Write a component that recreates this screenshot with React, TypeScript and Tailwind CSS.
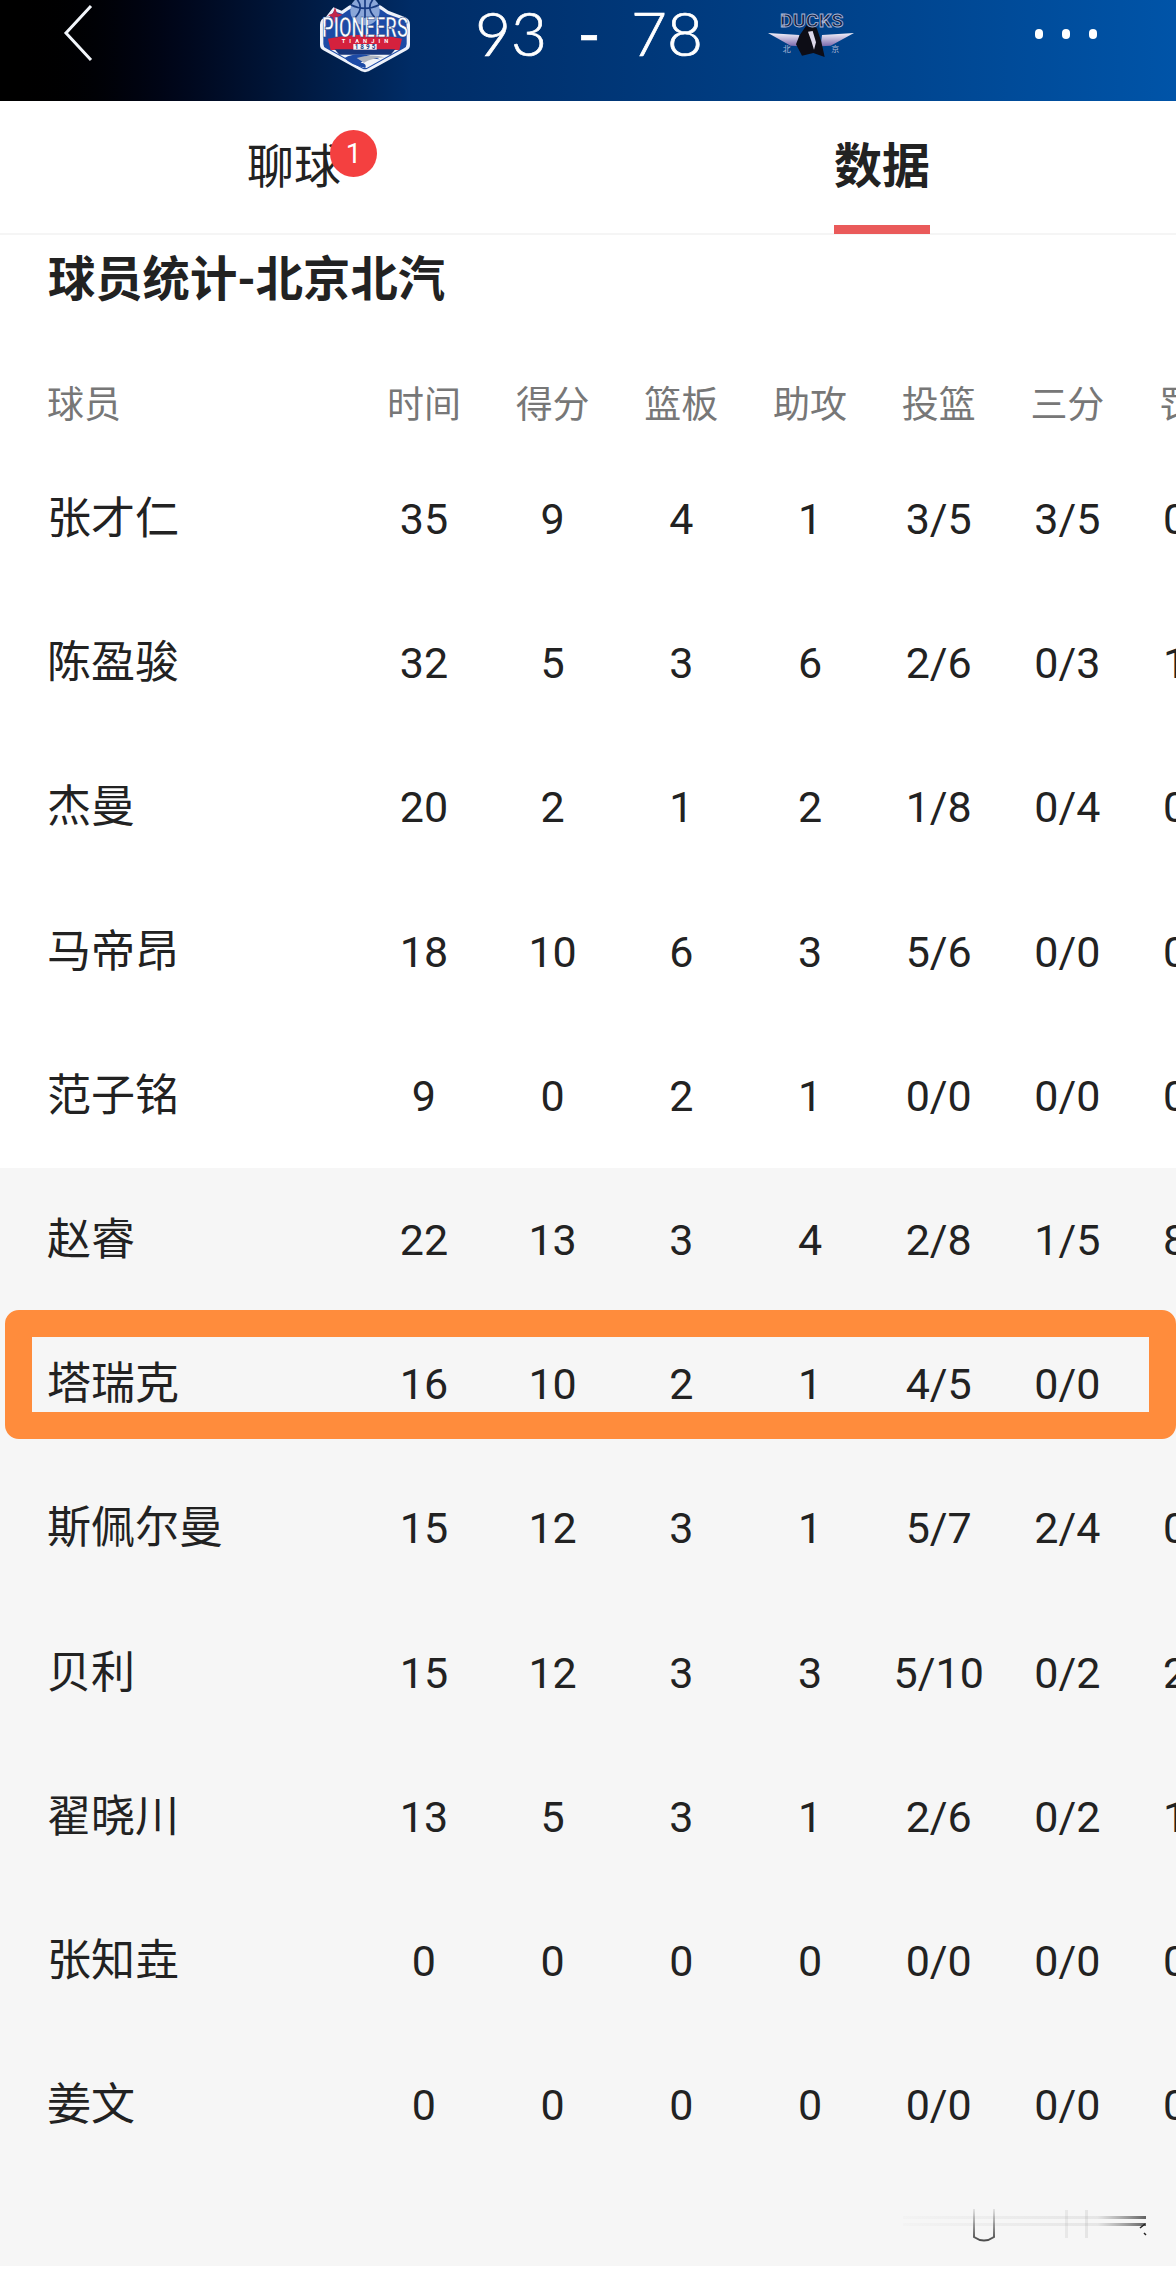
import React from 'react';

const CJK = "font-['Roboto','Noto_Sans_CJK_SC',sans-serif]";

const columns = ['时间', '得分', '篮板', '助攻', '投篮', '三分', '罚球'];

// the last column runs off the right edge of the screen, as in the app
const starters = [
  ['张才仁', '35', '9', '4', '1', '3/5', '3/5', '0/0'],
  ['陈盈骏', '32', '5', '3', '6', '2/6', '0/3', '1/2'],
  ['杰曼', '20', '2', '1', '2', '1/8', '0/4', '0/0'],
  ['马帝昂', '18', '10', '6', '3', '5/6', '0/0', '0/0'],
  ['范子铭', '9', '0', '2', '1', '0/0', '0/0', '0/0'],
];

const bench = [
  ['赵睿', '22', '13', '3', '4', '2/8', '1/5', '8/8'],
  ['塔瑞克', '16', '10', '2', '1', '4/5', '0/0', '2/2'],
  ['斯佩尔曼', '15', '12', '3', '1', '5/7', '2/4', '0/0'],
  ['贝利', '15', '12', '3', '3', '5/10', '0/2', '2/2'],
  ['翟晓川', '13', '5', '3', '1', '2/6', '0/2', '1/2'],
  ['张知垚', '0', '0', '0', '0', '0/0', '0/0', '0/0'],
  ['姜文', '0', '0', '0', '0', '0/0', '0/0', '0/0'],
];

const PioneersLogo = () => (
  <svg viewBox="0 0 360 240" className="h-[80px] w-[120px] shrink-0">
    <path d="M60 74 Q60 56 78 50 L100 22 L125 32 Q195 -24 265 32 L312 50 Q330 56 330 74 L330 135 Q330 146 320 151 L206 214 Q195 219 184 214 L70 151 Q60 146 60 135 Z" fill="#eef2fa" />
    <path d="M70 78 Q70 62 84 58 L102 34 L128 42 Q195 -12 262 42 L306 58 Q320 62 320 78 L320 132 Q320 141 312 145 L202 206 Q195 210 188 206 L78 145 Q70 141 70 132 Z" fill="#1c4aa6" />
    <circle cx="195" cy="32" r="44" fill="#8aa6d8" />
    <path d="M152 14 Q195 36 238 14 M195 -12 L195 54 M166 52 Q195 22 166 -8 M224 52 Q195 22 224 -8" stroke="#173a80" strokeWidth="5" fill="none" />
    <path d="M84 116 Q195 92 306 116 L298 150 L92 150 Z" fill="#d4213d" />
    <path d="M94 150 L296 150 L200 204 L190 204 Z" fill="#f2f4f8" />
    <path d="M104 148 L286 148 L272 164 L118 164 Z" fill="#16357a" />
    <path d="M134 174 Q176 150 240 178 Q200 172 182 188 Q202 190 196 204 Q150 194 134 174 Z" fill="#1c4aa6" />
    <path d="M170 174 Q212 160 254 172 Q216 174 192 188 Z" fill="#aeb3bf" />
    <polygon points="105,22 111,40 128,44 112,52 105,72 98,52 84,46 99,40" fill="#c2264a" />
    <text x="66" y="112" textLength="258" lengthAdjust="spacingAndGlyphs" fontFamily="Roboto, sans-serif" fontWeight="500" fontSize="84" fill="#ffffff" stroke="#173a80" strokeWidth="1.5">PIONEERS</text>
    <text x="125" y="130" textLength="140" fontFamily="Roboto, sans-serif" fontWeight="700" fontSize="17" fill="#ffffff">TIANJIN</text>
    <rect x="160" y="132" width="70" height="17" fill="#f2f4f8" />
    <text x="164" y="148" textLength="62" fontFamily="Roboto, sans-serif" fontWeight="700" fontSize="19" fill="#173a80">1895</text>
  </svg>
);

const DucksLogo = () => (
  <svg viewBox="0 0 300 180" className="h-[60px] w-[100px] shrink-0">
    <defs>
      <linearGradient id="wing" x1="0" y1="0" x2="0" y2="1">
        <stop offset="0" stopColor="#f4f2fa" />
        <stop offset="1" stopColor="#7a68ac" />
      </linearGradient>
    </defs>
    <path d="M24 84 L118 90 L122 124 L92 122 Z" fill="url(#wing)" />
    <path d="M282 84 L186 90 L182 124 L212 122 Z" fill="url(#wing)" />
    <path d="M118 92 L140 60 L170 68 L184 110 L194 156 L160 144 L126 152 L108 118 Z" fill="#0d0d16" />
    <path d="M144 80 L158 78 L168 112 L162 134 L154 108 Z" fill="#dcd8ea" />
    <text x="60" y="65" textLength="190" lengthAdjust="spacingAndGlyphs" fontFamily="Roboto, sans-serif" fontWeight="700" fontSize="56" fill="#172242" stroke="#aab6d6" strokeWidth="2.5">DUCKS</text>
    <text x="68" y="140" fontFamily="'Noto Sans CJK SC', sans-serif" fontSize="24" fill="#aeb8d6">北</text>
    <text x="214" y="140" fontFamily="'Noto Sans CJK SC', sans-serif" fontSize="24" fill="#aeb8d6">京</text>
  </svg>
);

const StatRow = ({ cells }: { cells: string[] }) => (
  <div className="grid h-[144.2px] grid-cols-[359.6px_repeat(7,128.7px)] items-center text-[43px] leading-[50px] text-[#222222]">
    {cells.map((cell, i) => (
      <div key={i} className={i === 0 ? 'pl-[47px] whitespace-nowrap text-[44px]' : 'text-center whitespace-nowrap'}>
        {cell}
      </div>
    ))}
  </div>
);

export default function App() {
  return (
    <div className={`relative h-[2270px] w-[1176px] overflow-hidden bg-white ${CJK}`}>
      {/* top bar */}
      <div className="flex h-[101px] items-start bg-gradient-to-r from-black via-[#002c66] via-35% to-[#0054a8]">
        <svg viewBox="0 0 30 58" className="ml-[63px] mt-[4px] h-[58px] w-[30px] shrink-0">
          <path d="M28 2 L3 29 L28 56" fill="none" stroke="#f2f6fb" strokeWidth="3" />
        </svg>
        <div className="ml-[207px]">
          <PioneersLogo />
        </div>
        <div className="ml-[55px] mt-[-2px] flex w-[228px] justify-between font-['Lato',sans-serif] text-[62px] font-light leading-[68px] text-white [-webkit-text-stroke:0.7px_white]">
          <span>93</span>
          <span className="font-normal">-</span>
          <span>78</span>
        </div>
        <div className="ml-[57px] mt-[5px]">
          <DucksLogo />
        </div>
        <div className="ml-[175px] mt-[29px] flex gap-[19px]">
          <span className="h-[10px] w-[8px] rounded-full bg-white" />
          <span className="h-[10px] w-[8px] rounded-full bg-white" />
          <span className="h-[10px] w-[8px] rounded-full bg-white" />
        </div>
      </div>

      {/* tabs */}
      <div className="grid h-[134px] grid-cols-2 border-b-2 border-[#f5f5f5] text-[47px] leading-[48px] text-[#222222]">
        <div className="flex justify-center pt-[42px]">
          <div className="relative">
            聊球
            <span className="absolute left-[83px] top-[-13px] flex h-[47px] w-[47px] items-center justify-center rounded-full bg-[#f44040] text-[28px] leading-none text-white">
              1
            </span>
          </div>
        </div>
        <div className="flex flex-col items-center pt-[42px]">
          <span className="text-[48px] font-bold">数据</span>
          <span className="mt-[34px] h-[9px] w-[96px] bg-[#ea5a5a]" />
        </div>
      </div>

      {/* section title */}
      <div className="h-[130px] pl-[48px] pt-[21px] text-[47.3px] font-bold leading-[48px] text-[#222222]">
        球员统计-北京北汽
      </div>

      {/* table head */}
      <div className="grid h-[82px] grid-cols-[359.6px_repeat(7,128.7px)] items-center text-[37px] leading-[44px] text-[#777777]">
        <div className="pl-[47px]">球员</div>
        {columns.map((name) => (
          <div key={name} className="whitespace-nowrap text-center">
            {name}
          </div>
        ))}
      </div>

      {starters.map((cells) => (
        <StatRow key={cells[0]} cells={cells} />
      ))}

      {/* bench block */}
      <div className="relative mt-px h-[1098px] bg-[#f6f6f6]">
        <div className="-mt-px">
          {bench.map((cells) => (
            <StatRow key={cells[0]} cells={cells} />
          ))}
        </div>
        <svg viewBox="0 0 260 40" className="absolute left-[900px] top-[1039px] h-[40px] w-[260px]">
          <defs>
            <linearGradient id="smudge" x1="0" y1="0" x2="1" y2="0">
              <stop offset="0" stopColor="#555555" stopOpacity="0.02" />
              <stop offset="0.8" stopColor="#555555" stopOpacity="0.1" />
              <stop offset="1" stopColor="#222222" stopOpacity="0.7" />
            </linearGradient>
            <linearGradient id="ubar" x1="0" y1="0" x2="0" y2="1">
              <stop offset="0" stopColor="#333333" stopOpacity="0.1" />
              <stop offset="1" stopColor="#222222" stopOpacity="0.8" />
            </linearGradient>
          </defs>
          <rect x="3" y="9" width="243" height="3" fill="url(#smudge)" />
          <rect x="3" y="16" width="243" height="3" fill="url(#smudge)" />
          <path d="M74 2 L74 30 Q84 37 94 30 L94 2" fill="none" stroke="url(#ubar)" strokeWidth="2" />
          <rect x="165" y="3" width="3" height="28" fill="#999999" fillOpacity="0.15" />
          <rect x="185" y="3" width="3" height="28" fill="#999999" fillOpacity="0.18" />
          <path d="M245 17 L240 21 M244 26 L246 28" stroke="#222222" strokeWidth="1.5" />
        </svg>
      </div>

      {/* orange highlight frame drawn over the screenshot */}
      <div className="absolute left-[5px] top-[1310px] h-[129px] w-[1171px] rounded-[14px] border-[27px] border-[#ff8c3c]" />
    </div>
  );
}
